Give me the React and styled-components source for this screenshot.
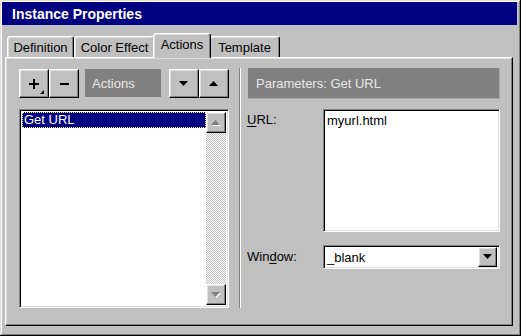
import React from 'react';
import styled, { createGlobalStyle } from 'styled-components';

const GlobalStyle = createGlobalStyle`
  html, body {
    margin: 0;
    padding: 0;
    background: #c0c0c0;
  }
  body {
    font-family: "Liberation Sans", Arial, sans-serif;
    font-size: 13px;
    color: #000;
  }
  * {
    box-sizing: border-box;
  }
`;

const raised = `
  background: #c0c0c0;
  border: 1px solid;
  border-color: #fff #000 #000 #fff;
  box-shadow: inset -1px -1px #808080, inset 1px 1px #dfdfdf;
`;

const sunken = `
  background: #fff;
  border: 1px solid;
  border-color: #808080 #fff #fff #808080;
  box-shadow: inset 1px 1px #000, inset -1px -1px #dfdfdf;
`;

const Window = styled.div`
  width: 521px;
  height: 336px;
  background: #c0c0c0;
  padding: 2px 4px 2px 2px;
  display: flex;
  flex-direction: column;
  box-shadow: inset -1px -1px #000, inset 1px 1px #dfdfdf,
    inset -2px -2px #808080, inset 2px 2px #fff;
`;

const TitleBar = styled.div`
  height: 23px;
  background: #000080;
  color: #fff;
  font-weight: bold;
  font-size: 14px;
  padding-left: 10px;
  display: flex;
  align-items: center;
`;

const Body = styled.div`
  padding: 8px 4px 0 3px;
`;

const TabStrip = styled.div`
  display: flex;
  align-items: flex-end;
  height: 24px;
  padding-left: 2px;
  position: relative;
  z-index: 1;
`;

const Tab = styled.div`
  width: ${(p) => (p.$active ? p.$w + 4 : p.$w)}px;
  height: ${(p) => (p.$active ? 25 : 21)}px;
  margin: ${(p) => (p.$active ? '0 -2px -1px' : '0')};
  padding-bottom: ${(p) => (p.$active ? 4 : 0)}px;
  background: #c0c0c0;
  border: 1px solid;
  border-bottom: none;
  border-color: #fff #000 transparent #fff;
  border-radius: 3px 3px 0 0;
  box-shadow: inset -1px 0 #808080, inset 1px 1px #dfdfdf;
  display: flex;
  align-items: center;
  justify-content: center;
  position: relative;
  z-index: ${(p) => (p.$active ? 2 : 1)};
  white-space: nowrap;
`;

const Panel = styled.div`
  height: 269px;
  background: #c0c0c0;
  border: 1px solid;
  border-color: #fff #000 #000 #fff;
  box-shadow: inset -1px -1px #808080, inset 1px 1px #dfdfdf;
  padding: 11px 0 0 13px;
  display: flex;
  align-items: flex-start;
`;

const LeftCol = styled.div`
  width: 210px;
  display: flex;
  flex-direction: column;
  gap: 11px;
`;

const Toolbar = styled.div`
  display: flex;
  height: 29px;
`;

const ToolButton = styled.div`
  ${raised}
  width: 30px;
  height: 29px;
  margin-left: ${(p) => p.$gap || 0}px;
  display: flex;
  align-items: center;
  justify-content: center;
  position: relative;
`;

const CornerMark = styled.svg`
  position: absolute;
  right: 4px;
  bottom: 3px;
`;

const GroupLabel = styled.div`
  width: 76px;
  height: 28px;
  margin-left: 6px;
  background: #808080;
  color: #e8e8e8;
  padding-left: 7px;
  display: flex;
  align-items: center;
`;

const ListBox = styled.div`
  ${sunken}
  height: 199px;
  padding: 2px;
  display: flex;
`;

const Items = styled.div`
  flex: 1;
`;

const Item = styled.div`
  height: 16px;
  line-height: 14px;
  padding-left: 1px;
  background: ${(p) => (p.$selected ? '#000080' : 'transparent')};
  color: ${(p) => (p.$selected ? '#fff' : '#000')};
  border: 1px dotted ${(p) => (p.$selected ? '#ffffc0' : 'transparent')};
`;

const ScrollBar = styled.div`
  width: 20px;
  display: flex;
  flex-direction: column;
  justify-content: space-between;
  background: repeating-conic-gradient(#fff 0 25%, #c0c0c0 0 50%) 0 0 / 2px 2px;
`;

const ScrollButton = styled.div`
  ${raised}
  width: 20px;
  height: 21px;
  display: flex;
  align-items: center;
  justify-content: center;
`;

const Separator = styled.div`
  width: 2px;
  height: 240px;
  margin: -1px 0 0 10px;
  border-left: 1px solid #808080;
  border-right: 1px solid #fff;
`;

const RightCol = styled.div`
  width: 252px;
  margin: -1px 0 0 7px;
  display: flex;
  flex-direction: column;
`;

const Header = styled.div`
  height: 31px;
  background: #808080;
  color: #e8e8e8;
  padding-left: 8px;
  display: flex;
  align-items: center;
  border-right: 1px solid #a8a8a8;
  border-bottom: 1px solid #a8a8a8;
`;

const FieldRow = styled.div`
  display: flex;
  align-items: ${(p) => (p.$center ? 'center' : 'flex-start')};
  margin-top: ${(p) => p.$top}px;
  margin-left: -1px;
`;

const Label = styled.label`
  width: 76px;
  padding-top: ${(p) => p.$pad || 0}px;
  line-height: 16px;
`;

const Key = styled.span`
  text-decoration: underline;
  text-underline-offset: 2px;
`;

const TextBox = styled.div`
  ${sunken}
  width: 177px;
  height: 123px;
  padding: 3px;
  line-height: 16px;
`;

const Select = styled.div`
  ${sunken}
  width: 177px;
  height: 24px;
  padding: 2px 2px 2px 3px;
  display: flex;
  align-items: center;
  justify-content: space-between;
`;

const DropButton = styled.div`
  ${raised}
  width: 19px;
  height: 20px;
  display: flex;
  align-items: center;
  justify-content: center;
`;

function Plus() {
  return (
    <svg width="10" height="10" viewBox="0 0 10 10">
      <rect x="0" y="4" width="10" height="2" fill="#000" />
      <rect x="4" y="0" width="2" height="10" fill="#000" />
    </svg>
  );
}

function Minus() {
  return (
    <svg width="9" height="10" viewBox="0 0 9 10">
      <rect x="0" y="4" width="9" height="2" fill="#000" />
    </svg>
  );
}

function Arrow({ dir = 'down', disabled }) {
  const down = '0,0 9,0 4.5,5';
  const up = '0,5 9,5 4.5,0';
  const pts = dir === 'down' ? down : up;
  return (
    <svg width="10" height="6" viewBox="0 0 10 6">
      {disabled && <polygon points={pts} fill="#fff" transform="translate(1,1)" />}
      <polygon points={pts} fill={disabled ? '#808080' : '#000'} />
    </svg>
  );
}

const tabs = [
  { name: 'Definition', w: 67 },
  { name: 'Color Effect', w: 81 },
  { name: 'Actions', w: 54, active: true },
  { name: 'Template', w: 71 },
];

export default function App() {
  return (
    <>
      <GlobalStyle />
      <Window>
        <TitleBar>Instance Properties</TitleBar>
        <Body>
          <TabStrip>
            {tabs.map((t) => (
              <Tab key={t.name} $w={t.w} $active={t.active}>
                {t.name}
              </Tab>
            ))}
          </TabStrip>
          <Panel>
            <LeftCol>
              <Toolbar>
                <ToolButton>
                  <Plus />
                  <CornerMark width="4" height="4" viewBox="0 0 4 4">
                    <polygon points="4,0 4,4 0,4" fill="#000" />
                  </CornerMark>
                </ToolButton>
                <ToolButton>
                  <Minus />
                </ToolButton>
                <GroupLabel>Actions</GroupLabel>
                <ToolButton $gap={8}>
                  <Arrow dir="down" />
                </ToolButton>
                <ToolButton>
                  <Arrow dir="up" />
                </ToolButton>
              </Toolbar>
              <ListBox>
                <Items>
                  <Item $selected>Get URL</Item>
                </Items>
                <ScrollBar>
                  <ScrollButton>
                    <Arrow dir="up" disabled />
                  </ScrollButton>
                  <ScrollButton>
                    <Arrow dir="down" disabled />
                  </ScrollButton>
                </ScrollBar>
              </ListBox>
            </LeftCol>
            <Separator />
            <RightCol>
              <Header>Parameters: Get URL</Header>
              <FieldRow $top={10}>
                <Label $pad={3}>
                  <Key>U</Key>RL:
                </Label>
                <TextBox>myurl.html</TextBox>
              </FieldRow>
              <FieldRow $top={13} $center>
                <Label>
                  Win<Key>d</Key>ow:
                </Label>
                <Select>
                  <span>_blank</span>
                  <DropButton>
                    <Arrow dir="down" />
                  </DropButton>
                </Select>
              </FieldRow>
            </RightCol>
          </Panel>
        </Body>
      </Window>
    </>
  );
}
